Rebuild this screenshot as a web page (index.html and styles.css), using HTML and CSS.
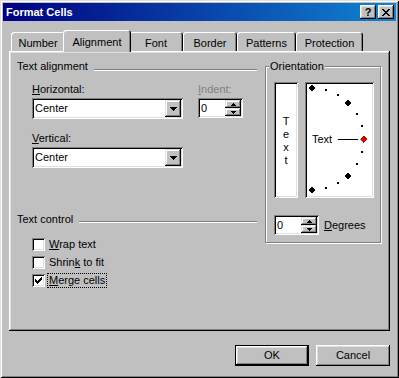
FILE: index.html
```html
<!DOCTYPE html>
<html lang="en">
<head>
  <meta charset="UTF-8">
  <title>Format Cells</title>
  <link rel="stylesheet" href="styles.css">
</head>
<body>

  <div class="window">
    <!-- Barra de titulo -->
    <div class="titlebar">
      <span class="title">Format Cells</span>
      <div class="title-buttons">
        <div class="tbtn help">?</div>
        <div class="tbtn">
          <svg width="8" height="7" viewBox="0 0 8 7" shape-rendering="crispEdges"><path fill="#000" d="M0 0h2v1H0z M6 0h2v1H6z M1 1h2v1H1z M5 1h2v1H5z M2 2h4v1H2z M3 3h2v1H3z M2 4h4v1H2z M1 5h2v1H1z M5 5h2v1H5z M0 6h2v1H0z M6 6h2v1H6z"/></svg>
        </div>
      </div>
    </div>

    <div class="dialog-body">
      <div class="tabs">
        <div class="tab tab-number">Number</div>
        <div class="tab tab-alignment active">Alignment</div>
        <div class="tab tab-font">Font</div>
        <div class="tab tab-border">Border</div>
        <div class="tab tab-patterns">Patterns</div>
        <div class="tab tab-protection">Protection</div>
      </div>

      <div class="tab-panel">
        <div class="col-left">
          <div class="group-title"><span>Text alignment</span><i class="etch"></i></div>

          <div class="align-fields">
            <div class="field-stack">
              <div class="lbl"><u>H</u>orizontal:</div>
              <div class="combo">
                <span class="combo-text">Center</span>
                <span class="drop-btn">
                  <svg width="7" height="4" viewBox="0 0 7 4" shape-rendering="crispEdges"><path fill="#000" d="M0 0h7v1H0z M1 1h5v1H1z M2 2h3v1H2z M3 3h1v1H3z"/></svg>
                </span>
              </div>
              <div class="lbl lbl-second"><u>V</u>ertical:</div>
              <div class="combo">
                <span class="combo-text">Center</span>
                <span class="drop-btn">
                  <svg width="7" height="4" viewBox="0 0 7 4" shape-rendering="crispEdges"><path fill="#000" d="M0 0h7v1H0z M1 1h5v1H1z M2 2h3v1H2z M3 3h1v1H3z"/></svg>
                </span>
              </div>
            </div>

            <div class="indent">
              <div class="lbl disabled"><u>I</u>ndent:</div>
              <div class="spin">
                <span class="spin-text">0</span>
                <span class="spin-btns">
                  <span class="spin-btn"><svg width="5" height="3" viewBox="0 0 5 3" shape-rendering="crispEdges"><path fill="#000" d="M2 0h1v1H2z M1 1h3v1H1z M0 2h5v1H0z"/></svg></span>
                  <span class="spin-btn"><svg width="5" height="3" viewBox="0 0 5 3" shape-rendering="crispEdges"><path fill="#000" d="M0 0h5v1H0z M1 1h3v1H1z M2 2h1v1H2z"/></svg></span>
                </span>
              </div>
            </div>
          </div>

          <div class="group-title group-control"><span>Text control</span><i class="etch"></i></div>

          <div class="checks">
            <div class="check">
              <span class="box"></span>
              <span class="check-lbl"><u>W</u>rap text</span>
            </div>
            <div class="check">
              <span class="box"></span>
              <span class="check-lbl">Shrin<u>k</u> to fit</span>
            </div>
            <div class="check">
              <span class="box">
                <svg width="7" height="7" viewBox="0 0 7 7" shape-rendering="crispEdges"><path fill="#000" d="M6 0h1v1H6z M5 1h2v1H5z M0 2h1v1H0z M4 2h3v1H4z M0 3h2v1H0z M3 3h3v1H3z M0 4h5v1H0z M1 5h3v1H1z M2 6h1v1H2z"/></svg>
              </span>
              <span class="check-lbl focus"><u>M</u>erge cells</span>
            </div>
          </div>
        </div>

        <!-- Orientacion -->
        <fieldset class="orientation">
          <legend>Orientation</legend>
          <div class="orient-row">
            <div class="vtext">
              <span>T</span><span>e</span><span>x</span><span>t</span>
            </div>
            <div class="dial">
              <svg width="65" height="112" viewBox="0 0 65 112" shape-rendering="crispEdges">
                <path fill="#000" d="M5 0.5l3.5 3.5l-3.5 3.5l-3.5 -3.5z"/>
                <path fill="#000" d="M41 88.5l3.5 3.5l-3.5 3.5l-3.5 -3.5z"/>
                <path fill="#000" d="M41 15.5l3.5 3.5l-3.5 3.5l-3.5 -3.5z"/>
                <path fill="#000" d="M5 102.5l3.5 3.5l-3.5 3.5l-3.5 -3.5z"/>
                <path fill="#e00000" stroke="#800000" stroke-width="0.6" d="M56.5 51.5l3.5 3.5l-3.5 3.5l-3.5 -3.5z"/>
                <rect x="18" y="5" width="2" height="2" fill="#000"/>
                <rect x="30" y="10" width="2" height="2" fill="#000"/>
                <rect x="49" y="29" width="2" height="2" fill="#000"/>
                <rect x="54" y="41" width="2" height="2" fill="#000"/>
                <rect x="54" y="67" width="2" height="2" fill="#000"/>
                <rect x="49" y="79" width="2" height="2" fill="#000"/>
                <rect x="30" y="98" width="2" height="2" fill="#000"/>
                <rect x="18" y="103" width="2" height="2" fill="#000"/>
                <rect x="31" y="55" width="20" height="1" fill="#000"/>
                <text x="5" y="59" class="dial-text">Text</text>
              </svg>
            </div>
          </div>
          <div class="degrees-row">
            <div class="spin">
              <span class="spin-text">0</span>
              <span class="spin-btns">
                <span class="spin-btn"><svg width="5" height="3" viewBox="0 0 5 3" shape-rendering="crispEdges"><path fill="#000" d="M2 0h1v1H2z M1 1h3v1H1z M0 2h5v1H0z"/></svg></span>
                <span class="spin-btn"><svg width="5" height="3" viewBox="0 0 5 3" shape-rendering="crispEdges"><path fill="#000" d="M0 0h5v1H0z M1 1h3v1H1z M2 2h1v1H2z"/></svg></span>
              </span>
            </div>
            <span class="degrees-lbl"><u>D</u>egrees</span>
          </div>
        </fieldset>
      </div>

      <div class="buttons">
        <div class="btn default">OK</div>
        <div class="btn">Cancel</div>
      </div>
    </div>
  </div>

</body>
</html>
```

FILE: styles.css
```css
body {
  margin: 0;
  font-family: "Liberation Sans", Arial, sans-serif;
  font-size: 11px;
  color: #000;
  background: #c0c0c0;
}

.window {
  width: 399px;
  height: 378px;
  box-sizing: border-box;
  padding: 3px;
  background: #c0c0c0;
  box-shadow: inset 1px 1px #dfdfdf, inset -1px -1px #000, inset 2px 2px #fff, inset -2px -2px #808080;
}

/* Barra de titulo */
.titlebar {
  height: 18px;
  display: flex;
  align-items: center;
  justify-content: space-between;
  padding: 0 2px 0 3px;
  background: linear-gradient(to right, #000080, #1084d0);
}

.title {
  color: #fff;
  font-weight: bold;
  line-height: 18px;
}

.title-buttons {
  display: flex;
  gap: 2px;
}

.tbtn {
  width: 16px;
  height: 14px;
  box-sizing: border-box;
  display: flex;
  align-items: center;
  justify-content: center;
  background: #c0c0c0;
  box-shadow: inset -1px -1px #000, inset 1px 1px #fff, inset -2px -2px #808080, inset 2px 2px #dfdfdf;
}

.tbtn.help {
  font-weight: bold;
  font-size: 11px;
  line-height: 14px;
}

.dialog-body {
  padding: 9px 6px 0 6px;
}

/* Pestañas */
.tabs {
  display: flex;
  align-items: flex-end;
  height: 21px;
  padding-left: 2px;
}

.tab {
  height: 19px;
  box-sizing: border-box;
  padding-top: 3px;
  line-height: 16px;
  text-align: center;
  background: #c0c0c0;
  border-radius: 3px 3px 0 0;
  box-shadow: inset 1px 1px #fff, inset -1px 0 #000, inset -2px 0 #808080;
}

.tab.active {
  height: 22px;
  margin: 0 -2px -1px;
  padding-top: 4px;
  z-index: 1;
}

.tab-number { width: 54px; }
.tab-alignment { width: 68px; }
.tab-font { width: 54px; }
.tab-border { width: 54px; }
.tab-patterns { width: 59px; }
.tab-protection { width: 67px; }

.tab-panel {
  height: 280px;
  box-sizing: border-box;
  padding: 9px 0 0 8px;
  display: grid;
  grid-template-columns: 240px 116px;
  column-gap: 8px;
  align-items: start;
  box-shadow: inset -1px -1px #000, inset 1px 1px #fff, inset -2px -2px #808080, inset 2px 2px #dfdfdf;
}

/* Grupos */
.group-title {
  display: flex;
  height: 13px;
  line-height: 13px;
  white-space: nowrap;
}

.etch {
  flex: 1;
  height: 0;
  margin: 9px 0 0 6px;
  border-top: 1px solid #808080;
  border-bottom: 1px solid #fff;
}

.group-control {
  margin-top: 45px;
}

.group-control .etch {
  margin-top: 8px;
}

.lbl {
  line-height: 13px;
  white-space: nowrap;
}

.lbl.disabled {
  color: #808080;
}

.align-fields {
  display: flex;
  margin-top: 10px;
  padding-left: 15px;
}

.field-stack {
  width: 151px;
}

.lbl-second {
  margin-top: 13px;
}

.combo {
  height: 21px;
  margin-top: 2px;
  box-sizing: border-box;
  padding: 2px;
  display: flex;
  align-items: center;
  justify-content: space-between;
  background: #fff;
  box-shadow: inset 1px 1px #808080, inset -1px -1px #fff, inset 2px 2px #000, inset -2px -2px #dfdfdf;
}

.combo-text {
  padding-left: 1px;
  line-height: 13px;
}

.drop-btn,
.spin-btn {
  display: flex;
  align-items: center;
  justify-content: center;
  background: #c0c0c0;
  box-shadow: inset -1px -1px #000, inset 1px 1px #dfdfdf, inset -2px -2px #808080, inset 2px 2px #fff;
}

.drop-btn {
  width: 16px;
  height: 17px;
}

.indent {
  margin-left: 15px;
}

.spin {
  width: 45px;
  height: 20px;
  margin-top: 2px;
  box-sizing: border-box;
  padding: 2px;
  display: flex;
  justify-content: space-between;
  background: #fff;
  box-shadow: inset 1px 1px #808080, inset -1px -1px #fff, inset 2px 2px #000, inset -2px -2px #dfdfdf;
}

.spin-text {
  padding-left: 1px;
  line-height: 16px;
}

.spin-btns {
  display: flex;
  flex-direction: column;
}

.spin-btn {
  width: 16px;
  height: 8px;
}

/* Casillas */
.checks {
  margin-top: 9px;
  padding-left: 15px;
}

.check {
  display: flex;
  align-items: center;
  height: 18px;
}

.box {
  width: 13px;
  height: 13px;
  box-sizing: border-box;
  display: flex;
  align-items: center;
  justify-content: center;
  background: #fff;
  box-shadow: inset 1px 1px #808080, inset -1px -1px #fff, inset 2px 2px #000, inset -2px -2px #dfdfdf;
}

.check-lbl {
  margin-left: 3px;
  padding: 0 1px;
  line-height: 13px;
}

.check-lbl.focus {
  outline: 1px dotted #000;
}

/* Orientacion */
.orientation {
  margin: 0;
  min-width: 0;
  padding: 9px 6px 7px 8px;
  border: 1px solid #808080;
  box-shadow: 1px 1px #fff, inset 1px 1px #fff;
}

.orientation legend {
  margin-left: -5px;
  padding: 0 1px;
  line-height: 13px;
  background: #c0c0c0;
}

.orient-row {
  display: flex;
  gap: 7px;
}

.vtext,
.dial {
  height: 116px;
  box-sizing: border-box;
  padding: 2px;
  background: #fff;
  box-shadow: inset 1px 1px #808080, inset -1px -1px #fff, inset 2px 2px #000, inset -2px -2px #dfdfdf;
}

.vtext {
  width: 24px;
  display: flex;
  flex-direction: column;
  align-items: center;
  justify-content: center;
  padding-top: 4px;
  line-height: 13px;
}

.dial {
  width: 69px;
}

.dial svg {
  display: block;
}

.dial-text {
  font-family: "Liberation Sans", Arial, sans-serif;
  font-size: 11px;
}

.degrees-row {
  display: flex;
  align-items: center;
  margin-top: 17px;
}

.degrees-row .spin {
  margin-top: 0;
}

.degrees-lbl {
  margin-left: 5px;
}

/* Botones */
.buttons {
  display: flex;
  justify-content: flex-end;
  gap: 7px;
  margin-top: 14px;
}

.btn {
  width: 74px;
  height: 21px;
  box-sizing: border-box;
  line-height: 21px;
  text-align: center;
  background: #c0c0c0;
  box-shadow: inset -1px -1px #000, inset 1px 1px #fff, inset -2px -2px #808080, inset 2px 2px #dfdfdf;
}

.btn.default {
  box-shadow: inset 0 0 0 1px #000, inset -2px -2px #000, inset 2px 2px #fff, inset -3px -3px #808080, inset 3px 3px #dfdfdf;
}
```
